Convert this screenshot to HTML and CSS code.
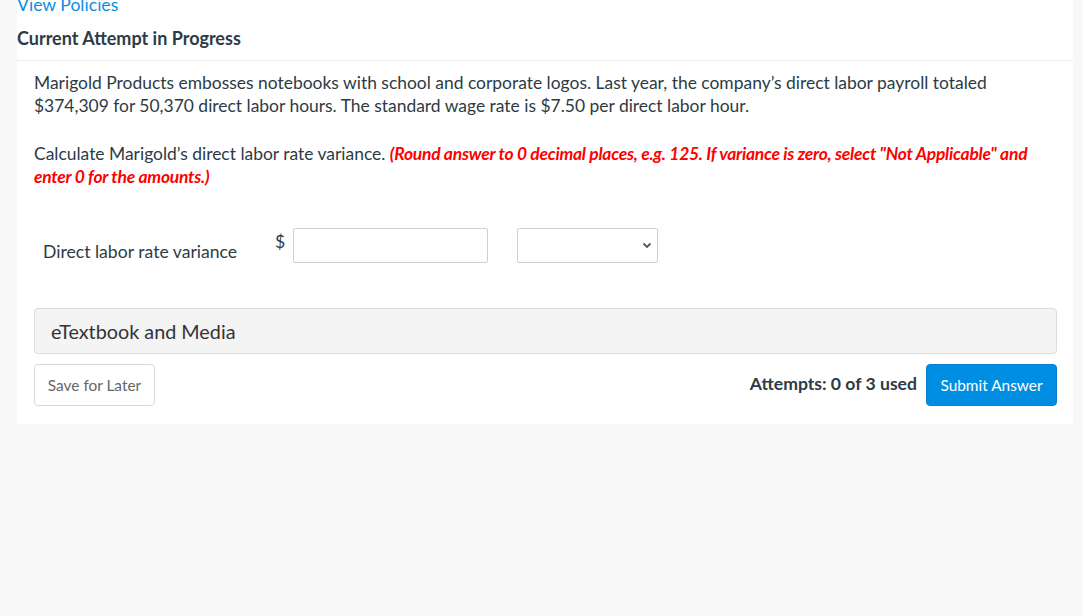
FILE: index.html
```html
<!DOCTYPE html>
<html lang="en">
<head>
<meta charset="utf-8">
<title>Current Attempt in Progress</title>
<link rel="stylesheet" href="styles.css">
</head>
<body>
<div class="panel">
  <div class="header">
    <a class="policies" href="#">View Policies</a>
    <h2 class="title">Current Attempt in Progress</h2>
  </div>
  <div class="content">
    <p class="para">Marigold Products embosses notebooks with school and corporate logos. Last year, the company’s direct labor payroll totaled $374,309 for 50,370 direct labor hours. The standard wage rate is $7.50 per direct labor hour.</p>
    <p class="para">Calculate Marigold’s direct labor rate variance. <span class="note">(Round answer to 0 decimal places, e.g. 125. If variance is zero, select "Not Applicable" and enter 0 for the amounts.)</span></p>
    <div class="answer-row">
      <span class="row-label">Direct labor rate variance</span>
      <span class="dollar">$</span>
      <input class="amount" type="text">
      <span class="select-wrap">
        <select class="choice"><option></option><option>Favorable</option><option>Unfavorable</option><option>Not Applicable</option></select>
        <svg class="chev" width="10" height="7" viewBox="0 0 10 7"><path d="M1.5 1.5 L5 5 L8.5 1.5" fill="none" stroke="#555" stroke-width="1.8"/></svg>
      </span>
    </div>
    <div class="media-box">eTextbook and Media</div>
    <div class="actions">
      <button class="btn-save">Save for Later</button>
      <div class="actions-right">
        <span class="attempts">Attempts: 0 of 3 used</span>
        <button class="btn-submit">Submit Answer</button>
      </div>
    </div>
  </div>
</div>
</body>
</html>
```

FILE: styles.css
```css
html, body {
  margin: 0;
  padding: 0;
}
body {
  background: #f8f8f8;
  font-family: Lato, "Open Sans", sans-serif;
  color: #2d3b45;
  font-size: 17.45px;
}
.panel {
  margin-left: 17px;
  width: 1056px;
  background: #fff;
  margin-top: -6px;
}
.header {
  border-bottom: 1px solid #ececec;
  padding-bottom: 11px;
}
.policies {
  display: block;
  color: #0a8ee3;
  text-decoration: none;
  line-height: 22px;
  font-size: 17.6px;
}
.title {
  margin: 11px 0 0;
  font-size: 18px;
  line-height: 22px;
  font-weight: 700;
  color: #2d3b45;
}
.content {
  padding: 10px 16px 18px 17px;
}
.para {
  margin: 0 0 25px;
  line-height: 23px;
  font-size: 17.45px;
  color: #2d3b45;
}
.note {
  color: #ff0000;
  font-weight: 700;
  font-style: italic;
  letter-spacing: -0.25px;
}
.answer-row {
  display: flex;
  align-items: flex-start;
  padding-left: 9px;
  margin-top: 40px;
}
.row-label {
  width: 232px;
  padding-top: 13px;
  line-height: 22px;
  font-size: 17.6px;
}
.dollar {
  width: 18px;
  line-height: 22px;
  font-size: 17.6px;
  padding-top: 3px;
}
.amount {
  box-sizing: border-box;
  width: 195px;
  height: 35px;
  border: 1px solid #cfcfcf;
  border-radius: 2px;
  margin: 0;
  padding: 4px 8px;
  font-family: inherit;
  font-size: 15px;
}
.select-wrap {
  position: relative;
  display: block;
  margin-left: 29px;
  width: 141px;
  height: 35px;
}
.choice {
  box-sizing: border-box;
  width: 141px;
  height: 35px;
  margin: 0;
  border: 1px solid #cfcfcf;
  border-radius: 2px;
  background: #fff;
  font-family: inherit;
  font-size: 15px;
  -webkit-appearance: none;
  appearance: none;
}
.chev {
  position: absolute;
  right: 6px;
  top: 14px;
  pointer-events: none;
}
.media-box {
  margin-top: 45px;
  height: 46px;
  box-sizing: border-box;
  border: 1px solid #dcdcdc;
  border-radius: 4px;
  background: #f4f4f4;
  padding-left: 16px;
  display: flex;
  align-items: center;
  font-size: 19.8px;
  color: #333;
}
.actions {
  margin-top: 10px;
  display: flex;
  justify-content: space-between;
  align-items: center;
}
.actions-right {
  display: flex;
  align-items: center;
  gap: 9px;
}
.btn-save {
  box-sizing: border-box;
  width: 121px;
  height: 42px;
  border: 1px solid #d9d9d9;
  border-radius: 4px;
  background: #fff;
  color: #666;
  font-family: inherit;
  font-size: 15.4px;
  padding: 0;
}
.attempts {
  font-weight: 700;
  font-size: 17.6px;
  color: #2d3b45;
  position: relative;
  top: -2px;
}
.btn-submit {
  box-sizing: border-box;
  width: 131px;
  height: 42px;
  border: 1px solid #0681d4;
  border-radius: 4px;
  background: #008ee2;
  color: #fff;
  font-family: inherit;
  font-size: 15.4px;
  padding: 0;
}
```
